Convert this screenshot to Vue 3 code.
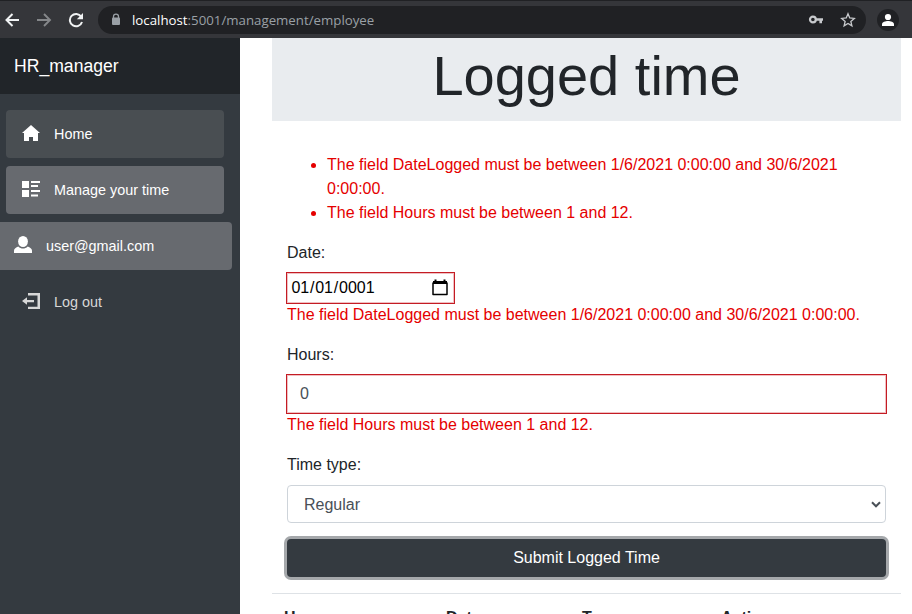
<script setup>
const dateError = 'The field DateLogged must be between 1/6/2021 0:00:00 and 30/6/2021 0:00:00.'
const hoursError = 'The field Hours must be between 1 and 12.'
const columns = ['Hours', 'Date', 'Type', 'Actions']
</script>

<template>
  <div class="window">
    <header class="toolbar">
      <div class="nav-icons">
        <svg width="16" height="16" viewBox="0 0 16 16"><path d="M15 8H2.500M8.500 2l-6 6 6 6" fill="none" stroke="#f1f3f4" stroke-width="2" /></svg>
        <svg width="16" height="16" viewBox="0 0 16 16"><path d="M1 8h13M8 2l6 6-6 6" fill="none" stroke="#85878a" stroke-width="1.900" /></svg>
        <svg width="16" height="16" viewBox="0 0 16 16"><path d="M13.200 4.600A6.200 6.200 0 1 0 14 10" fill="none" stroke="#f1f3f4" stroke-width="2" /><path d="M15 1v6.200H8.800z" fill="#f1f3f4" /></svg>
      </div>
      <div class="address">
        <svg class="lock" width="10" height="13" viewBox="0 0 10 13"><path d="M2.500 6V3.600a2.500 2.500 0 0 1 5 0V6" fill="none" stroke="#9aa0a6" stroke-width="1.300" /><rect x="1" y="4.500" width="8" height="7.500" rx="1" fill="#9aa0a6" /></svg>
        <span class="url"><b>localhost</b>:5001/management/employee</span>
        <svg class="key" width="16" height="12" viewBox="0 0 16 12"><circle cx="4.900" cy="5.500" r="2.900" fill="none" stroke="#c8cacd" stroke-width="2.200" /><path d="M7.500 4.300H15v2.500h-1v2.500h-2.600V6.800H7.500z" fill="#c8cacd" /></svg>
        <svg class="star" width="16" height="16" viewBox="0 0 16 16"><path d="M8 1.800l1.750 4.200 4.550.400-3.450 3 1.050 4.450L8 11.500l-3.900 2.350 1.050-4.450-3.450-3 4.550-.400z" fill="none" stroke="#c8cacd" stroke-width="1.300" /></svg>
      </div>
      <div class="profile">
        <svg width="22" height="22" viewBox="0 0 22 22"><circle cx="11" cy="8" r="3.100" fill="#fff" /><path d="M5 17v-1.700c0-2.300 3.500-3.300 6-3.300s6 1 6 3.300V17z" fill="#fff" /></svg>
      </div>
    </header>
    <div class="body">
      <aside>
        <div class="brand">HR_manager</div>
        <nav>
          <a class="item home">
            <svg width="20" height="20" viewBox="0 0 20 20"><path d="M10 1L1 9h2v8h5v-4h4v4h5V9h2z" fill="#fff" /></svg>Home
          </a>
          <a class="item manage">
            <svg width="20" height="20" viewBox="0 0 20 20"><path d="M1 1h7v7H1zM1 10h7v7H1zM10 1h9v2h-9zM10 5h7v2h-7zM10 10h9v2h-9zM10 14.500h7v2h-7z" fill="#fff" /></svg>Manage your time
          </a>
          <a class="item user">
            <svg width="20" height="20" viewBox="0 0 20 20"><ellipse cx="10" cy="5.500" rx="4.900" ry="5.500" fill="#fff" /><path d="M5.300 10.500C3 11.700 1 12.600 1 14.700V17h18v-2.300c0-2.100-2-3-4.300-4.200-2.700 2.700-6.700 2.700-9.400 0z" fill="#fff" /></svg>user@gmail.com
          </a>
          <a class="item logout">
            <svg width="20" height="20" viewBox="0 0 20 20"><path d="M7 1.100h12V17H7v-2.200h9.500V3.400H7zM1 9l5-3.700V8h7v2.200H6v2.600z" fill="#d7d7d7" /></svg>Log out
          </a>
        </nav>
      </aside>
      <main>
        <div class="jumbotron"><h1>Logged time</h1></div>
        <form @submit.prevent>
          <ul>
            <li>{{ dateError }}</li>
            <li>{{ hoursError }}</li>
          </ul>
          <label>Date:</label>
          <div class="date invalid">
            <span>01</span><span>/</span><span>01</span><span>/</span><span class="year">0001</span>
            <svg width="16" height="18" viewBox="0 0 16 18"><path d="M1 4h14v11.500H1z" fill="none" stroke="#000" stroke-width="1.500" stroke-linejoin="round" /><path d="M1 2h14v3H1zM2.500.500h2V3h-2zM11.500.500h2V3h-2z" fill="#000" /></svg>
          </div>
          <p class="message">{{ dateError }}</p>
          <label>Hours:</label>
          <div class="control invalid">0</div>
          <p class="message">{{ hoursError }}</p>
          <label>Time type:</label>
          <div class="control select">Regular
            <svg width="10" height="8" viewBox="0 0 10 8"><path d="M1 1.300l4 4 4-4" fill="none" stroke="#495057" stroke-width="2" /></svg>
          </div>
          <button>Submit Logged Time</button>
        </form>
        <div class="table-head"><span v-for="c in columns" :key="c">{{ c }}</span></div>
      </main>
    </div>
  </div>
</template>

<style>
body { overflow: hidden; }
</style>

<style scoped>
* { box-sizing: border-box; }
.window { width: 912px; height: 614px; overflow: hidden; display: flex; flex-direction: column; background: #fff; color: #212529; font: 16px/24px "Liberation Sans", Arial, sans-serif; }
svg { display: block; flex: none; }
.toolbar { height: 38px; flex: none; background: #35363a; border-top: 1px solid #202124; display: flex; align-items: center; padding-left: 4px; }
.nav-icons { display: flex; gap: 16px; width: 94px; }
.address { width: 768px; height: 28px; border-radius: 14px; background: #202124; display: flex; align-items: center; padding: 0 10px 0 13px; }
.url { margin-left: 11px; flex: 1; font: 13.270px/20px "Open Sans", "Noto Sans", sans-serif; color: #9aa0a6; white-space: nowrap; }
.url b { font-weight: 400; color: #fff; }
.key { margin-right: 16px; }
.profile { width: 22px; height: 22px; border-radius: 50%; background: #202124; margin-left: 11px; }
.body { flex: 1; min-height: 0; display: flex; }
aside { width: 240px; flex: none; background: #343a40; color: #fff; }
.brand { height: 56px; background: #212529; padding-left: 14px; font-size: 17.600px; line-height: 56px; }
nav { padding-top: 16px; display: flex; flex-direction: column; gap: 8px; }
.item { height: 48px; display: flex; align-items: center; margin-left: 6px; width: 218px; padding-left: 15px; gap: 13px; border-radius: 4px; font-size: 14.400px; }
.home { background: #494e52; }
.manage, .user { background: #676a6f; }
.user { margin-left: 0; width: 232px; padding-left: 13px; border-radius: 0 4px 4px 0; }
.logout { color: #d7d7d7; }
main { width: 629px; margin-left: 32px; }
.jumbotron { height: 83px; background: #e9ecef; }
h1 { margin: 0; padding-top: 4px; font-size: 56px; font-weight: 400; line-height: 67px; text-align: center; }
form { padding: 32px 15px 0; }
ul { margin: 0 0 16px; padding-left: 40px; color: #e50000; }
label { display: block; margin-bottom: 8px; }
.date { width: 167px; height: 30px; display: flex; align-items: center; padding: 0 5px 0 3px; color: #000; }
.date span { padding: 0 .400px; }
.date .year { flex: 1; }
.invalid { outline: 1px solid #c41c24; border: 1px solid #f0bfc2; }
.message { margin: 0 0 16px; color: #e50000; white-space: nowrap; }
.control { height: 38px; padding: 6px 12px; color: #495057; }
.select { border: 1px solid #ced4da; border-radius: 4px; padding: 7px 4px 5px 16px; display: flex; align-items: center; justify-content: space-between; }
button { display: block; width: 100%; height: 38px; margin-top: 16px; border: 0; border-radius: 4px; background: #343a40; color: #fff; font: inherit; box-shadow: 0 0 0 3px #a5a8ab; }
.table-head { margin-top: 16px; border-top: 1px solid #dee2e6; padding: 12px; display: grid; grid-template-columns: 162px 136px 139px 1fr; font-weight: 700; }
</style>
